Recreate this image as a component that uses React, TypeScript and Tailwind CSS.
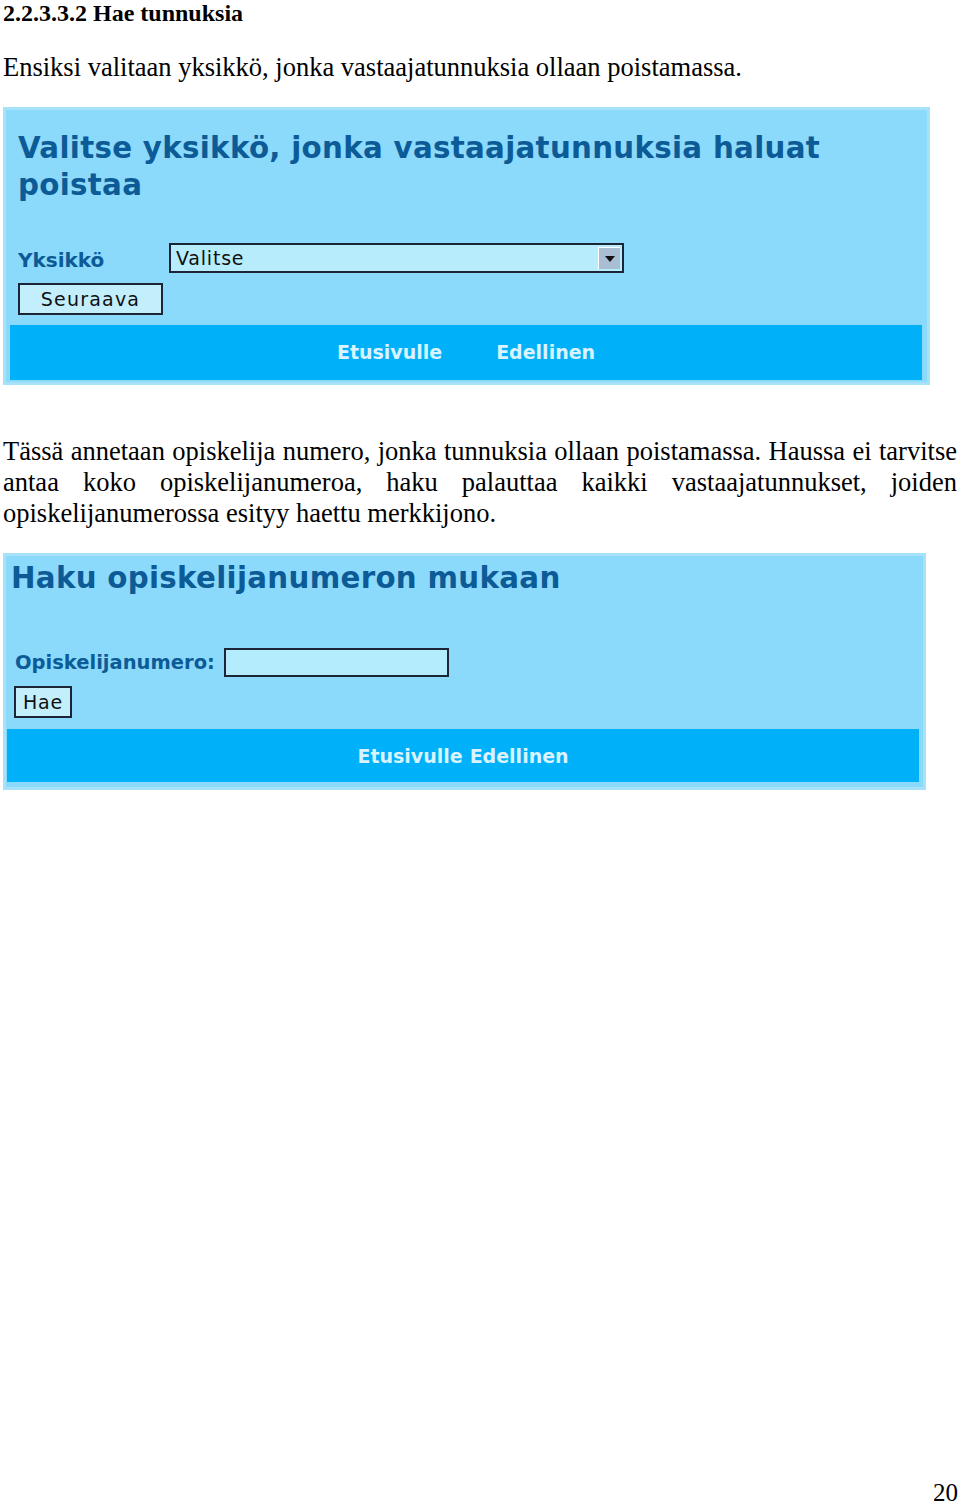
export default function App() {
  const ui = "font-['DejaVu_Sans',Verdana,sans-serif]";
  return (
    <div className="w-[960px] h-[1507px] bg-white text-black flex flex-col font-['Liberation_Serif','Times_New_Roman',serif] overflow-hidden">
      {/* Section heading */}
      <h2 className="pl-[3px] text-[24px] leading-[26px] font-bold">2.2.3.3.2 Hae tunnuksia</h2>

      <p className="mt-[26px] pl-[3px] text-[26.5px] leading-[31px]">
        Ensiksi valitaan yksikkö, jonka vastaajatunnuksia ollaan poistamassa.
      </p>

      {/* Panel 1 */}
      <div className={`mt-[24px] ml-[3px] w-[927px] h-[278px] border-[3px] border-[#a6e3fb] bg-[#8bd9fb] flex flex-col ${ui}`}>
        <h3 className="pt-[20px] pl-[12px] text-[29.3px] leading-[37px] font-bold text-[#0c5b96] tracking-[0.3px]">
          Valitse yksikkö, jonka vastaajatunnuksia haluat
          <br />
          poistaa
        </h3>
        <div className="mt-[39px] pl-[12px] flex items-center">
          <span className="w-[151px] pt-[4px] text-[20px] leading-[24px] font-bold text-[#0c5b96]">Yksikkö</span>
          <div className="w-[455px] h-[30px] border-2 border-[#1b2536] bg-[#b7ecfd] flex items-center">
            <span className="flex-1 pl-[5px] text-[19px] leading-[24px] tracking-[0.8px] text-[#111]">Valitse</span>
            <div className="w-[22px] h-[22px] mr-[2px] bg-[#a9bdd3] border-l border-t border-white flex items-center justify-center">
              <svg width="10" height="6" viewBox="0 0 10 6"><path d="M0 0h10L5 6z" fill="#111" /></svg>
            </div>
          </div>
        </div>
        <div className="mt-[10px] pl-[12px]">
          <button className="w-[145px] h-[32px] border-2 border-[#1b2536] bg-[#c3effd] text-[19px] tracking-[1.2px] text-[#111]">Seuraava</button>
        </div>
        <div className="mt-[10px] ml-[4px] mr-[5px] h-[55px] bg-[#00b1fa] flex items-center justify-center gap-[54px] text-[19px] font-bold text-[#d9f3ff]">
          <span>Etusivulle</span>
          <span>Edellinen</span>
        </div>
      </div>

      {/* Paragraph 2 */}
      <div className="mt-[51px] pl-[3px] pr-[3px] text-[26.5px] leading-[31px]">
        <div className="text-justify [text-align-last:justify]">
          Tässä annetaan opiskelija numero, jonka tunnuksia ollaan poistamassa. Haussa ei tarvitse
        </div>
        <div className="text-justify [text-align-last:justify]">
          antaa koko opiskelijanumeroa, haku palauttaa kaikki vastaajatunnukset, joiden
        </div>
        <div>opiskelijanumerossa esityy haettu merkkijono.</div>
      </div>

      {/* Panel 2 */}
      <div className={`mt-[24px] ml-[3px] w-[923px] h-[237px] border-[3px] border-[#a6e3fb] bg-[#8bd9fb] flex flex-col ${ui}`}>
        <h3 className="pt-[4px] pl-[5px] text-[29.3px] leading-[37px] font-bold text-[#0c5b96] tracking-[0.3px]">
          Haku opiskelijanumeron mukaan
        </h3>
        <div className="mt-[51px] pl-[9px] flex items-center gap-[9px]">
          <span className="text-[19.5px] font-bold text-[#0c5b96]">Opiskelijanumero:</span>
          <div className="w-[225px] h-[29px] border-2 border-[#1b2536] bg-[#b5ecfd]" />
        </div>
        <div className="mt-[9px] pl-[8px]">
          <button className="w-[58px] h-[32px] border-2 border-[#1b2536] bg-[#c3effd] text-[19px] tracking-[0.8px] text-[#111]">Hae</button>
        </div>
        <div className="mt-[11px] ml-[1px] mr-[4px] h-[53px] bg-[#00b1fa] flex items-center justify-center gap-[7px] text-[19px] font-bold text-[#d9f3ff]">
          <span>Etusivulle</span>
          <span>Edellinen</span>
        </div>
      </div>

      {/* Page number */}
      <div className="mt-auto pr-[2px] text-right text-[25px] leading-[28px]">20</div>
    </div>
  );
}
